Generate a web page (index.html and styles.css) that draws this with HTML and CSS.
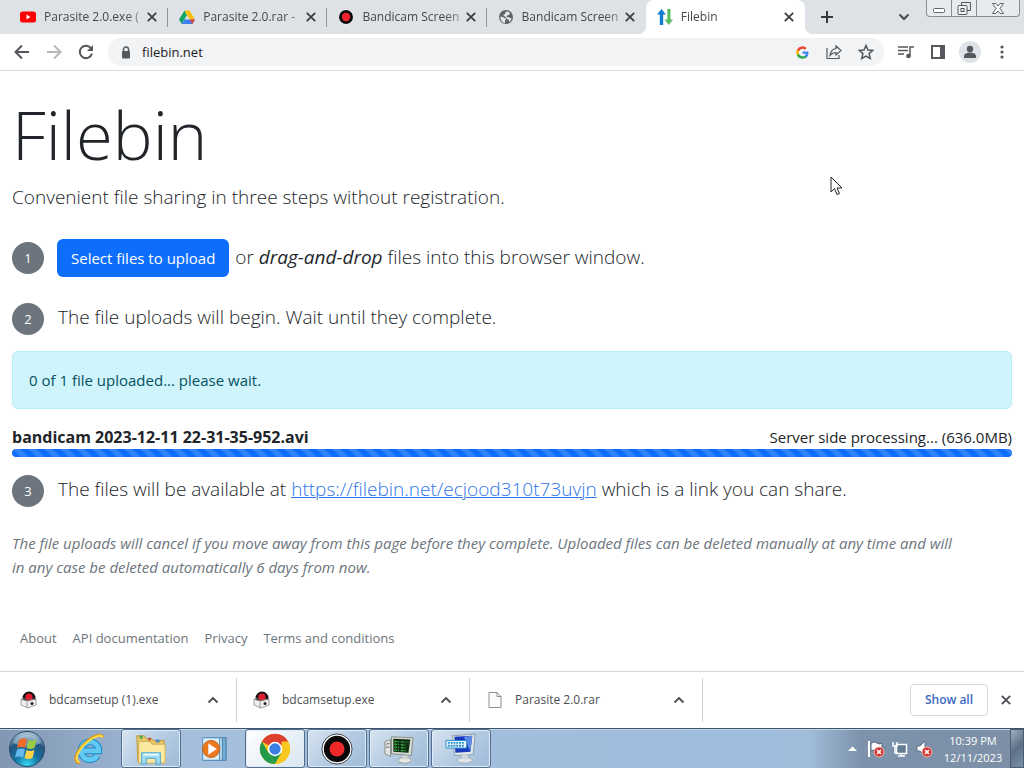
FILE: index.html
```
<!DOCTYPE html>
<html lang="en">
<head>
<meta charset="utf-8">
<meta name="viewport" content="width=device-width, initial-scale=1">
<title>Filebin</title>
<link rel="stylesheet" href="styles.css">
</head>
<body>
<svg class="defs" width="0" height="0" aria-hidden="true">
  <symbol id="close" viewBox="0 0 10 10"><path d="M1.500 1.500l7 7m0-7l-7 7" stroke="currentColor" stroke-width="1.500"/></symbol>
  <symbol id="up" viewBox="0 0 12 8"><path d="M1.500 6.500L6 2l4.500 4.500" fill="none" stroke="currentColor" stroke-width="1.800"/></symbol>
  <symbol id="setup" viewBox="0 0 18 18">
    <circle cx="9" cy="7" r="6.500" fill="#161214"/><circle cx="9" cy="6" r="3.600" fill="#df1c30"/>
    <path d="M1 8l6 2 9-2v6l-8 3-7-3z" fill="#f0eeee" stroke="#817878" stroke-width=".7"/>
    <path d="M7 11v6M1 9l3-2 4 3 5-2 3 1" fill="none" stroke="#8c8383" stroke-width=".8"/><circle cx="12" cy="12.500" r="1.500" fill="#2b2023"/>
  </symbol>
</svg>

<header class="browser">
  <div class="tabstrip">
    <nav class="tabs" aria-label="Open tabs">
      <div class="tab">
        <svg class="fav" viewBox="0 0 16 16"><rect y="2.500" width="16" height="11" rx="2.500" fill="#f00"/><path d="M6.500 5.500v5l4-2.500z" fill="#fff"/></svg>
        <a class="tab-title" href="#">Parasite 2.0.exe (</a>
        <button class="tab-close" aria-label="Close tab"><svg><use href="#close"/></svg></button>
      </div>
      <div class="tab">
        <svg class="fav" viewBox="0 0 16 16"><path d="M5.500 1.500L0 10.500 2.700 15 8 6z" fill="#14a464"/><path d="M5.500 1.500h5L16 10.500h-5.300z" fill="#fdbc07"/><path d="M2.700 15l2.600-4.500H16L13.300 15z" fill="#3f80ec"/><path d="M10.700 10.500H16L13.300 15z" fill="#ea4335"/></svg>
        <a class="tab-title" href="#">Parasite 2.0.rar -</a>
        <button class="tab-close" aria-label="Close tab"><svg><use href="#close"/></svg></button>
      </div>
      <div class="tab">
        <svg class="fav" viewBox="0 0 16 16"><circle cx="8" cy="8" r="7.500" fill="#fff"/><circle cx="8" cy="8" r="7" fill="#0b0b0b"/><circle cx="8" cy="8" r="4.200" fill="#f02330"/></svg>
        <a class="tab-title" href="#">Bandicam Screen</a>
        <button class="tab-close" aria-label="Close tab"><svg><use href="#close"/></svg></button>
      </div>
      <div class="tab tab-last">
        <svg class="fav" viewBox="0 0 16 16"><circle cx="8" cy="8" r="7" fill="#5f6368"/><path d="M2.500 7.500l3.500 1 2 1.500-1 2v2.200C4 13.500 2 11 2.500 7.500zM8 2.500c2 0 3 .5 4 1.500L11 6 9 6.500 8.500 8l3 .5 2 1c-.5 2-1.500 3-2.500 3.500V11l-2-1-2-2.500L5 6l2-1z" fill="#e4e7ea"/></svg>
        <a class="tab-title" href="#">Bandicam Screen</a>
        <button class="tab-close" aria-label="Close tab"><svg><use href="#close"/></svg></button>
      </div>
      <div class="tab tab-active">
        <svg class="fav" viewBox="0 0 16 16"><path d="M4.500 0L9 5.500H6.200V16H2.800V5.500H0z" fill="#147bd1"/><path d="M11.800 16L7.500 10.500h2.800V0h3.200v10.500H16z" fill="#5dbb63"/></svg>
        <a class="tab-title" href="#" aria-current="page">Filebin</a>
        <button class="tab-close" aria-label="Close tab"><svg><use href="#close"/></svg></button>
      </div>
    </nav>
    <button class="strip-btn" aria-label="New tab"><svg width="14" height="14" viewBox="0 0 14 14"><path d="M7 1v12M1 7h12" stroke="#35393d" stroke-width="2"/></svg></button>
    <button class="strip-btn search-tabs" aria-label="Search tabs"><svg width="12" height="8" viewBox="0 0 12 8"><path d="M1.500 1.500L6 6l4.500-4.500" fill="none" stroke="#45494d" stroke-width="2"/></svg></button>
    <div class="window-controls">
      <button aria-label="Minimize"><svg width="12" height="12" viewBox="0 0 12 12"><rect x=".5" y="6.500" width="11" height="4" rx="1" fill="#fff" stroke="#62676c"/></svg></button>
      <button aria-label="Restore"><svg width="14" height="13" viewBox="0 0 14 13"><path d="M4.500 3V.5h9v8H10" fill="none" stroke="#55595e"/><rect x="1" y="3.500" width="9" height="9" rx="1" fill="#f4f5f6" stroke="#55595e"/><rect x="4" y="6.500" width="3" height="3" fill="none" stroke="#55595e"/></svg></button>
      <button class="wide" aria-label="Close"><svg width="12" height="11" viewBox="0 0 12 11"><path d="M.5.500h3.500l2 2.500 2-2.500h3.500L8 5.500l3.500 5H8L6 8l-2 2.500H.5l3.500-5z" fill="#f7f7f8" stroke="#62676c"/></svg></button>
    </div>
  </div>

  <div class="toolbar">
    <button class="tool" aria-label="Back"><svg viewBox="0 0 16 16"><path d="M15 8H2M8 1.500L1.500 8 8 14.500" class="line thick"/></svg></button>
    <button class="tool faded" aria-label="Forward"><svg viewBox="0 0 16 16"><path d="M1 8h13M8 1.500L14.500 8 8 14.500" class="line thick"/></svg></button>
    <button class="tool" aria-label="Reload"><svg viewBox="0 0 16 16"><path d="M13.200 4.500A6.200 6.200 0 1 0 14 9.500" class="line thick"/><path d="M15 1v6H9z" fill="currentColor"/></svg></button>
    <div class="omnibox">
      <svg class="lock" viewBox="0 0 10 13"><path d="M2.500 6V3.500a2.500 2.500 0 0 1 5 0V6" class="line"/><rect x="1" y="5" width="8" height="7.500" rx="1" fill="currentColor"/></svg>
      <input class="url" type="text" value="filebin.net" aria-label="Address">
      <button class="tool" aria-label="Google"><svg viewBox="0 0 24 24" class="g"><path fill="#4285f4" d="M23 12.300c0-.8 0-1.600-.2-2.300H12v4.500h6.200a5 5 0 0 1-2.300 3.500v3h3.700c2.200-2 3.400-5 3.400-8.700z"/><path fill="#34a853" d="M12 23.500c3 0 5.700-1 7.600-2.800L15.900 18a7 7 0 0 1-10.300-3.600H1.800v3A11.500 11.500 0 0 0 12 23.500z"/><path fill="#fbbc05" d="M5.600 14.300a7 7 0 0 1 0-4.500v-3H1.800a11.500 11.500 0 0 0 0 10.500z"/><path fill="#ea4335" d="M12 5.200c1.700 0 3.200.6 4.400 1.700l3.300-3.300A11.400 11.400 0 0 0 1.800 6.800l3.800 3A6.800 6.800 0 0 1 12 5.200z"/></svg></button>
      <button class="tool" aria-label="Share"><svg viewBox="0 0 16 16"><path d="M1 4v10.500h12V11M10 2l5 4.500-5 4.500V8.500c-2.500 0-4 .5-6 3C4.500 7.500 6.500 5 10 4.500z" class="line thin"/></svg></button>
      <button class="tool" aria-label="Bookmark"><svg viewBox="0 0 16 16"><path d="M8 1.500l2 4.500 4.800.4-3.700 3.200 1.200 4.900L8 12l-4.300 2.500 1.200-4.900L1.200 6.400 6 6z" class="line"/></svg></button>
    </div>
    <button class="tool" aria-label="Media"><svg viewBox="0 0 16 16"><path d="M0 3h10M0 6.500h10M0 10h6M12 11.500V3h4" class="line"/><circle cx="10.500" cy="12" r="2.300" fill="currentColor"/></svg></button>
    <button class="tool" aria-label="Side panel"><svg viewBox="0 0 16 16"><path d="M2 2h12v12H2z" class="line thick"/><path d="M10 2h4v12h-4z" fill="currentColor"/></svg></button>
    <button class="tool profile" aria-label="Profile"><svg viewBox="0 0 16 16"><circle cx="8" cy="5" r="3.200" fill="currentColor"/><path d="M2 14v-2c0-2.500 4-3.500 6-3.500s6 1 6 3.500v2z" fill="currentColor"/></svg></button>
    <button class="tool" aria-label="Menu"><svg viewBox="0 0 16 16" fill="currentColor"><circle cx="8" cy="3" r="1.600"/><circle cx="8" cy="8" r="1.600"/><circle cx="8" cy="13" r="1.600"/></svg></button>
  </div>
</header>

<main class="page">
  <h1>Filebin</h1>
  <p class="lead">Convenient file sharing in three steps without registration.</p>
  <div class="step step-upload">
    <span class="num">1</span>
    <p class="lead"><button class="select">Select files to upload</button> or <em>drag-and-drop</em> files into this browser window.</p>
  </div>
  <div class="step">
    <span class="num">2</span>
    <p class="lead">The file uploads will begin. Wait until they complete.</p>
  </div>
  <div class="alert" role="status">0 of 1 file uploaded... please wait.</div>
  <div class="file"><b>bandicam 2023-12-11 22-31-35-952.avi</b><span>Server side processing... (636.0MB)</span></div>
  <div class="progress" role="progressbar" aria-label="Upload progress"></div>
  <div class="step">
    <span class="num">3</span>
    <p class="lead">The files will be available at <a href="#">https://filebin.net/ecjood310t73uvjn</a> which is a link you can share.</p>
  </div>
  <p class="note">The file uploads will cancel if you move away from this page before they complete. Uploaded files can be deleted manually at any time and will<br> in any case be deleted automatically 6 days from now.</p>
  <footer class="links"><a href="#">About</a><a href="#">API documentation</a><a href="#">Privacy</a><a href="#">Terms and conditions</a></footer>
</main>

<section class="downloads" aria-label="Downloads">
  <div class="download"><svg class="dl-icon"><use href="#setup"/></svg><a href="#">bdcamsetup (1).exe</a><button aria-label="Options"><svg width="12" height="8"><use href="#up"/></svg></button></div>
  <div class="download"><svg class="dl-icon"><use href="#setup"/></svg><a href="#">bdcamsetup.exe</a><button aria-label="Options"><svg width="12" height="8"><use href="#up"/></svg></button></div>
  <div class="download"><svg class="dl-icon" viewBox="0 0 18 18"><path d="M3 1.500h8l4 4v11H3z" fill="#fcfcfc" stroke="#8d8f91"/><path d="M11 1.500v4h4" fill="none" stroke="#8d8f91"/></svg><a href="#">Parasite 2.0.rar</a><button aria-label="Options"><svg width="12" height="8"><use href="#up"/></svg></button></div>
  <button class="show-all">Show all</button>
  <button class="shelf-close" aria-label="Close downloads"><svg width="12" height="12"><use href="#close"/></svg></button>
</section>

<div class="taskbar">
  <button class="start" aria-label="Start"><svg width="38" height="38" viewBox="0 0 38 38">
    <defs><radialGradient id="orb" cx=".5" cy=".95" r=".9"><stop offset="0" stop-color="#35d6f2"/><stop offset=".4" stop-color="#14719f"/><stop offset=".75" stop-color="#25557f"/><stop offset="1" stop-color="#a6c0d4"/></radialGradient></defs>
    <circle cx="19" cy="19" r="17.500" fill="url(#orb)" stroke="#274867"/><path d="M5 13a16 16 0 0 1 28 0q-14 7-28 0" fill="#e6f2f8" opacity=".4"/>
    <path d="M11 10q4-3 8-1l-2 9q-4-2-8 0z" fill="#f26a2b"/><path d="M20.500 10q4 2 8-1l-2 9q-4 2-8 0z" fill="#9bcc43"/><path d="M9 19.500q4-2 8 0l-2 8q-4-2-8 0z" fill="#68b9ed"/><path d="M18.500 20q4 2 8 0l-2 8q-4 2-8 0z" fill="#ffd04a"/>
  </svg></button>
  <button class="task" aria-label="Internet Explorer"><svg viewBox="0 0 34 34"><path d="M26 24a9.500 9.500 0 1 1 1.500-5H10" fill="none" stroke="#1688cb" stroke-width="7"/><path d="M26 24a9.500 9.500 0 1 1 1.500-5H10" fill="none" stroke="#60caf3" stroke-width="5"/><path d="M7 32C-2 30 5 17 16 8 24 2 32 0 31 5" fill="none" stroke="#d79d1b" stroke-width="3"/><path d="M7 31C0 29 6 17 16 9 24 3 31 1 31 5" fill="none" stroke="#ffdc48" stroke-width="2"/></svg></button>
  <button class="task open" aria-label="File Explorer"><svg viewBox="0 0 34 34"><path d="M2 7V3h8l2 3h6l2 2h11v22H3z" fill="#e9c867" stroke="#b99442"/><path d="M4 9h12l2 3h14v20H4z" fill="#fbeaa0" stroke="#d4ae56"/><path d="M5 3h3v3H5z" fill="#44a650"/><path d="M14 5h3v3h-3z" fill="#cb5944"/><path d="M22 7h4v3h-4z" fill="#4686c5"/><path d="M7 33V21h20v12h-5v-6H12v6z" fill="#9ddaf0" stroke="#4ca4cf"/><path d="M9 23h16" stroke="#e7fbff" stroke-width="2"/></svg></button>
  <button class="task" aria-label="Media Player"><svg viewBox="0 0 34 34"><path d="M13 5h18v24H13z" fill="#72aad0" stroke="#427da9"/><path d="M10 5h17v24H10z" fill="#b8d9eb" stroke="#4a83ac"/><path d="M6 5h18v24H6z" fill="#d8ebf5" stroke="#4c8ab5"/><circle cx="15" cy="17" r="9" fill="#ed791f" stroke="#ca5e12"/><path d="M12 11v12l9-6z" fill="#fff"/></svg></button>
  <button class="task open current" aria-label="Chrome"><svg viewBox="0 0 34 34"><circle cx="17" cy="17" r="16" fill="#f8c820"/><path d="M17 17L3.100 9a16 16 0 0 1 27.800 0z" fill="#dc3e30"/><path d="M3.100 9L17 33A16 16 0 0 1 3.100 9z" fill="#239a4b"/><path d="M17 33l7-12-7-4-7 4z" fill="#239a4b"/><path d="M17 33l7-12V9h6.900A16 16 0 0 1 17 33z" fill="#f8c820"/><circle cx="17" cy="17" r="7.700" fill="#fff"/><circle cx="17" cy="17" r="6" fill="#397fe6"/></svg></button>
  <button class="task open" aria-label="Bandicam"><svg viewBox="0 0 34 34"><circle cx="17" cy="17" r="16" fill="#fff" stroke="#343840"/><circle cx="17" cy="17" r="14" fill="#0a0909"/><circle cx="17" cy="17" r="8" fill="#ef2929"/></svg></button>
  <button class="task open" aria-label="System monitor"><svg viewBox="0 0 34 34"><path d="M2 9l6-2v18l-6-3z" fill="#e4e5e2" stroke="#858b88"/><path d="M3 12l4-1M3 15h4" stroke="#666"/><path d="M9 4l23 1-2 19-21-2z" fill="#d4dad2" stroke="#828b82"/><path d="M11 6l18 1-2 14-16-1z" fill="#102e13"/><path d="M12 9l15 1M12 12l14 1M12 15l14 1M12 18l13 1" fill="none" stroke="#31ad3d" stroke-width="1.500" stroke-dasharray="3 1 1 2"/><ellipse cx="23" cy="29" rx="7" ry="3" fill="#e7e8e5" stroke="#979d98"/><path d="M21 24h5v4h-5z" fill="#d3d6d1"/></svg></button>
  <button class="task open" aria-label="On-screen keyboard"><svg viewBox="0 0 34 34"><path d="M8 3l24-2-2 22-20 1z" fill="#e0e5e9" stroke="#879aac"/><path d="M10 4l19-1-2 17-16 1z" fill="#1839bd"/><path d="M20 4l9-1-2 17z" fill="#5e8ae5"/><path d="M1 8h22v8H1z" fill="#eaf8ff" stroke="#248ac6"/><path d="M3 10.500h18M3 13.500h18" stroke="#248ac6" stroke-width="2" stroke-dasharray="2 1"/><ellipse cx="21" cy="29" rx="8" ry="3" fill="#e1e5e9" stroke="#a3afba"/><path d="M18 23h6v5h-6z" fill="#d1d8df"/></svg></button>
  <div class="tray">
    <button aria-label="Show hidden icons"><svg width="9" height="5" viewBox="0 0 9 5"><path d="M0 5l4.500-4.500L9 5z" fill="#fff"/></svg></button>
    <button aria-label="Action center"><svg width="18" height="18" viewBox="0 0 18 18"><path d="M2 1v16" stroke="#fff" stroke-width="2"/><path d="M4 3q4-2 6 0 3 2 5 0v8q-3 2-5 0-3-2-6 0z" fill="#fff" stroke="#546579"/><circle cx="12" cy="12" r="5" fill="#d2342f" stroke="#f2b7b3"/><path d="M10 10l4 4m0-4l-4 4" stroke="#fff" stroke-width="1.700"/></svg></button>
    <button aria-label="Network"><svg width="18" height="18" viewBox="0 0 18 18"><path d="M5.500 4.500h10v9h-10zM7 16h7M10.500 13.500V16" fill="#617d92" stroke="#fff" stroke-width="1.500"/><path d="M2 2v4h4V2M4 6v7h3" fill="none" stroke="#fff" stroke-width="1.500"/></svg></button>
    <button aria-label="Volume muted"><svg width="18" height="18" viewBox="0 0 18 18"><path d="M2 6h3l5-5v15l-5-5H2z" fill="#fff" stroke="#607287"/><circle cx="12" cy="12" r="5" fill="#d2342f" stroke="#f2b7b3"/><path d="M10 10l4 4m0-4l-4 4" stroke="#fff" stroke-width="1.700"/></svg></button>
    <div class="clock"><span>10:39 PM</span><span>12/11/2023</span></div>
  </div>
  <button class="desktop" aria-label="Show desktop"></button>
</div>
<svg class="cursor" width="13" height="20" viewBox="0 0 13 20" aria-hidden="true"><path d="M1 1v15l3.500-3.500L7 18.500l2.500-1L7 12h5z" fill="#fff" stroke="#222"/></svg>
</body>
</html>
```
FILE: styles.css
```
* { box-sizing: border-box; }
body {
  margin: 0;
  min-height: 100vh;
  display: flex;
  flex-direction: column;
  background: #fff;
  color: #212529;
  font-family: "Open Sans", "Noto Sans", sans-serif;
  font-size: 15px;
  line-height: 24px;
}
button { font: inherit; color: inherit; border: 0; padding: 0; background: none; }
a { color: inherit; text-decoration: none; }
svg { display: block; flex: none; }
.defs { position: absolute; }

/* Tabs */
.tabstrip { display: flex; align-items: flex-start; height: 34px; padding: 0 4px 0 9px; background: #dee1e6; }
.tabs { display: flex; flex: 0 1 796px; min-width: 0; height: 34px; }
.tab { position: relative; flex: 1 1 0; min-width: 0; display: flex; align-items: center; padding: 0 10px 0 11px; }
.tab::after { content: ""; position: absolute; right: 0; top: 8px; width: 1px; height: 19px; background: #92969c; }
.tab-last::after { display: none; }
.fav { width: 16px; height: 16px; margin-right: 8px; }
.tab-title {
  flex: 1; min-width: 0; overflow: hidden; white-space: nowrap;
  font-size: 12px; line-height: 18px; color: #45494d;
  mask-image: linear-gradient(to right, #000 80%, transparent 110%);
}
.tab-close { width: 12px; height: 12px; color: #3c4043; }
.tab-close svg { width: 12px; height: 12px; }
.tab-active { background: #fff; border-radius: 8px 8px 0 0; }
.tab-active::before, .tab-active::after {
  content: ""; position: absolute; top: auto; bottom: 0; width: 8px; height: 8px;
}
.tab-active::before { left: -8px; background: radial-gradient(circle at 0 0, transparent 8px, #fff 8px); }
.tab-active::after { right: -8px; background: radial-gradient(circle at 100% 0, transparent 8px, #fff 8px); }
.strip-btn { height: 34px; padding: 0 8px; margin-left: 7px; }
.search-tabs { margin-left: auto; margin-right: 8px; }
.window-controls { display: flex; height: 17px; border: 1px solid #8b8f95; border-top: 0; border-radius: 0 0 4px 4px; overflow: hidden; background: #e7eaee; }
.window-controls button { width: 25px; display: grid; place-items: center; border-right: 1px solid #8b8f95; }
.window-controls .wide { width: 42px; border-right: 0; }

/* Address bar */
.toolbar { display: flex; align-items: center; height: 37px; padding: 0 6px; border-bottom: 1px solid #d9dbdd; }
.tool { width: 32px; height: 28px; display: grid; place-items: center; color: #54585c; flex: none; }
.tool svg { width: 16px; height: 16px; }
.tool .g { width: 13px; height: 13px; }
.line { fill: none; stroke: currentColor; stroke-width: 1.5; }
.thick { stroke-width: 2; }
.thin { stroke-width: 1.2; }
.faded { color: #b5b8bb; }
.omnibox { flex: 1; min-width: 0; display: flex; align-items: center; height: 28px; margin: 0 6px; padding: 0 2px 0 13px; border-radius: 14px; background: #f1f3f4; }
.lock { width: 10px; height: 13px; color: #54585c; margin-right: 11px; }
.url { flex: 1; min-width: 0; border: 0; padding: 0; background: none; font: 13px/20px "Open Sans", sans-serif; color: #202124; }
.profile { position: relative; z-index: 0; }
.profile::before { content: ""; position: absolute; z-index: -1; inset: 3px 5px; border-radius: 50%; background: #dfe2e9; }

/* Page */
.page { flex: 1; padding: 0 12px; }
h1 { margin: 15px 0 0; font-size: 67px; line-height: 96px; font-weight: 300; }
p { margin: 0; }
.lead { font-size: 19px; line-height: 30px; font-weight: 300; }
.lead em { font-weight: 400; }
.step { display: flex; align-items: flex-start; gap: 14px; min-height: 32px; }
.step .lead { line-height: 28px; }
.step-upload { align-items: center; margin: 26px 0 25px; gap: 13px; min-height: 40px; }
.num { flex: none; width: 32px; height: 32px; border-radius: 50%; background: #6c757d; color: #fff; font-size: 13px; line-height: 32px; text-align: center; }
.select { height: 38px; padding: 0 14px; margin-right: 1px; border-radius: 6px; background: #0d6efd; color: #fff; font-size: 15px; font-weight: 400; line-height: 24px; }
.alert { margin: 16px 0; padding: 16px; border: 1px solid #b6effb; border-radius: 6px; background: #cff4fc; color: #055160; }
.file { display: flex; justify-content: space-between; }
.file b { font-size: 16px; }
.progress {
  height: 8px; margin-bottom: 18px; border-radius: 4px; background-color: #0d6efd;
  background-image: linear-gradient(45deg, #3082fd 25%, transparent 25%, transparent 50%, #3082fd 50%, #3082fd 75%, transparent 75%);
  background-size: 16px 16px;
}
.step a { color: #2f75e8; text-decoration: underline; text-decoration-thickness: 1px; }
.note { margin-top: 24px; color: #6c757d; font-style: italic; }
.links { display: flex; gap: 16px; margin: 47px 8px 20px; color: #6c757d; font-size: 13px; }

/* Downloads */
.downloads { display: flex; align-items: center; height: 57px; padding: 0 12px 0 4px; border-top: 1px solid #d5d7da; color: #4b4f53; font-size: 12px; line-height: 20px; }
.download { flex: 0 1 233px; min-width: 0; height: 44px; display: flex; align-items: center; padding: 0 17px 0 16px; border-right: 1px solid #cfd1d3; }
.dl-icon { width: 18px; height: 18px; margin-right: 11px; }
.download a { flex: 1; }
.show-all { margin-left: auto; margin-right: 12px; width: 78px; height: 32px; border: 1px solid #d4d7db; border-radius: 4px; color: #3969c3; font-weight: 600; }

/* Taskbar */
.taskbar {
  display: flex; height: 40px; border-top: 1px solid #3d536b;
  background: linear-gradient(to right, #8197b3 0, #a5bfdc 18%, #9fbddd 75%, #a1bdda 79%, #7d93ac 84%, #7c8fa6 100%);
  box-shadow: inset 0 1px #c7d8e8;
}
.start { width: 54px; margin-right: 5px; display: grid; place-items: center; }
.task { width: 60px; margin-right: 2px; display: grid; place-items: center; border-radius: 3px; }
.task svg { width: 32px; height: 32px; }
.open { border: 1px solid #526e8e; background: linear-gradient(135deg, #d7e4f1, #b3cae1 55%, #9ebbd9); box-shadow: inset 0 0 0 1px #dfebf6; }
.current { background: linear-gradient(135deg, #fff, #d8e5f1); }
.tray { display: flex; align-items: center; margin-left: auto; }
.tray button { width: 24px; display: grid; place-items: center; }
.clock { width: 74px; display: flex; flex-direction: column; align-items: center; color: #fff; font-size: 11px; line-height: 17px; }
.desktop { width: 14px; border: 1px solid #4a5c70; background: linear-gradient(135deg, #9eb0c3, #5c6f85 50%, #7c91a7); }
.cursor { position: absolute; left: 830px; top: 176px; }
```
